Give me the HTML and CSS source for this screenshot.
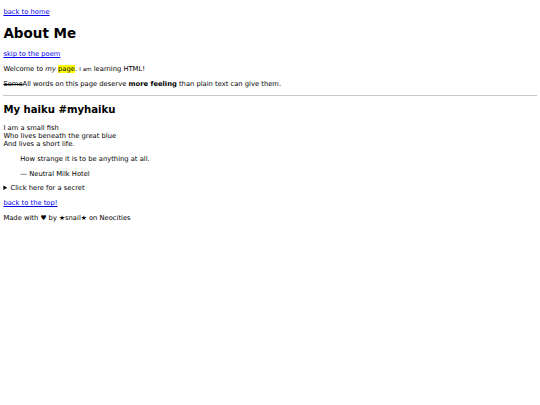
FILE: index.html
```html
<!DOCTYPE html>
<html>
<head>
<meta charset="utf-8">
<title>About Me</title>
<link rel="stylesheet" href="styles.css">
</head>
<body>
<nav class="nav"><a href="#">back to home</a></nav>
<h1 class="title">About Me</h1>
<p class="para"><a href="#poem">skip to the poem</a></p>
<p class="para">Welcome to <em>my</em> <mark class="hl">page</mark>. <small class="sm">I am</small> learning HTML!</p>
<p class="para"><s>Some</s>All words on this page deserve <strong>more feeling</strong> than plain text can give them.</p>
<hr class="rule">
<h2 class="subtitle" id="poem">My haiku #myhaiku</h2>
<p class="para">I am a small fish<br>Who lives beneath the great blue<br>And lives a short life.</p>
<blockquote class="quote">
<p class="para">How strange it is to be anything at all.</p>
<p class="para">— Neutral Milk Hotel</p>
</blockquote>
<details class="secret"><summary>Click here for a secret</summary><p class="para">Snails are cool.</p></details>
<p class="para"><a href="#">back to the top!</a></p>
<footer class="foot"><p class="para">Made with ♥ by ★snail★ on Neocities</p></footer>
</body>
</html>
```

FILE: styles.css
```css
html { background: #fff; }
body {
  margin: 3.4px;
  font-family: "DejaVu Sans", Verdana, sans-serif;
  font-size: 6.75px;
  color: #000;
}
a { color: #0000ee; }
.nav { padding-top: 4.6px; }
.title { font-size: 2em; margin: 0.67em 0; }
.subtitle { font-size: 1.5em; margin: 0.83em 0; }
.para { margin: 1.03em 0; }
.hl { background: #ffff00; color: #000; }
.sm { font-size: 0.833em; }
.rule {
  margin: 0.5em 0;
  border: 0;
  border-top: 1px solid #c8c8c8;
  height: 0;
}
.quote { margin: 1.03em 16.9px; }
.secret { margin: 0; }
.secret summary { display: list-item; }
.foot { margin: 0; }
```
